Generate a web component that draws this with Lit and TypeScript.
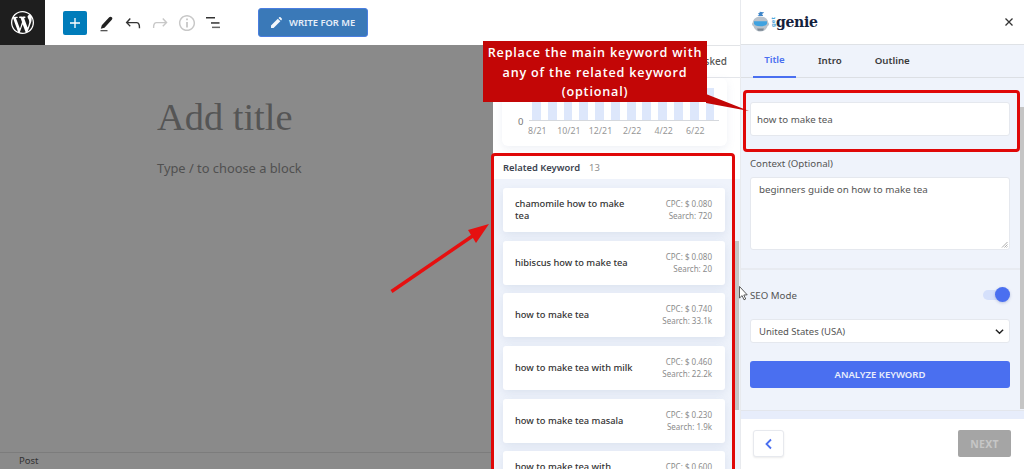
import { LitElement, html, css, svg } from "lit";
import { customElement } from "lit/decorators.js";

const keywords = [
  { name: "chamomile how to make tea", cpc: "CPC: $ 0.080", search: "Search: 720" },
  { name: "hibiscus how to make tea", cpc: "CPC: $ 0.080", search: "Search: 20" },
  { name: "how to make tea", cpc: "CPC: $ 0.740", search: "Search: 33.1k" },
  { name: "how to make tea with milk", cpc: "CPC: $ 0.460", search: "Search: 22.2k" },
  { name: "how to make tea masala", cpc: "CPC: $ 0.230", search: "Search: 1.9k" },
  { name: "how to make tea with condensed milk", cpc: "CPC: $ 0.600", search: "Search: 1k" },
];
const months = ["8/21", "10/21", "12/21", "2/22", "4/22", "6/22"];

@customElement("app-root")
export class AppRoot extends LitElement {
  static styles = css`
    :host { display: block; width: 1024px; height: 469px; overflow: hidden; position: relative; font-family: "Noto Sans", sans-serif; background: #fff; }
    * { box-sizing: border-box; }
    .page { display: flex; width: 1024px; height: 469px; }
    .left { width: 740px; display: flex; flex-direction: column; flex: none; }
    .topbar { height: 45px; flex: none; display: flex; align-items: center; background: #fff; }
    .wp { width: 45px; height: 45px; background: #1e1e1e; display: flex; align-items: center; justify-content: center; color: #fff; flex: none; }
    .wp svg { width: 23px; height: 23px; fill: currentColor; }
    .plus { width: 24px; height: 24px; margin-left: 18px; background: #007cba; border-radius: 2px; display: flex; align-items: center; justify-content: center; }
    .tools { display: flex; margin-left: 5px; }
    .tools svg { display: block; width: 22px; height: 22px; }
    .tool { width: 27px; height: 24px; display: flex; align-items: center; justify-content: center; }
    .write { margin-left: 31px; width: 110px; height: 29px; border: 1px solid #4a7ee0; border-radius: 3px; background: #3a79b8; color: #e6eef8; display: flex; align-items: center; gap: 7px; padding-left: 12px; font-size: 9.4px; font-weight: 600; }
    .body { flex: 1; display: flex; min-height: 0; }
    .editor { flex: 1; background: #8a8a8a; display: flex; flex-direction: column; }
    .canvas { flex: 1; padding: 49px 0 0 157px; color: #4c4c4c; }
    .add { font-family: "Liberation Serif", serif; font-size: 38.4px; line-height: 46px; color: #555; }
    .type { font-size: 12.85px; line-height: 18px; margin-top: 19px; color: #505050; }
    .status { height: 17px; border-top: 1px solid #7c7c7c; padding-left: 19px; font-size: 9.5px; line-height: 15px; color: #333; }
    .mid { width: 247px; flex: none; background: #fff; display: flex; flex-direction: column; border-top: 1px solid #e2e4e7; position: relative; overflow: hidden; }
    .midtabs { height: 32px; flex: none; border-bottom: 1px solid #e4e6ea; display: flex; justify-content: flex-end; align-items: center; padding-right: 13px; font-size: 10px; font-weight: 500; color: #555; padding-bottom: 2px; }
    .chart { height: 68px; margin: 0 13px 0 9px; border-radius: 6px; background: #fff; box-shadow: 0 3px 8px rgba(120,140,180,.12); position: relative; flex: none; }
    .chartin { display: flex; flex-direction: column; padding: 10px 0 0 15px; }
    .bars { display: flex; gap: 6.9px; height: 33px; width: 190px; margin-left: 12px; padding-left: 3px; flex: none; border-bottom: 1px solid #d5d8dd; }
    .bars i { display: block; width: 8.9px; height: 100%; background: #dde7fb; flex: none; }
    .zero { position: absolute; left: 16px; top: 37px; font-size: 9.5px; color: #777; line-height: 14px; }
    .months { display: flex; margin-left: 4.5px; font-size: 8.8px; color: #979797; line-height: 12px; margin-top: 4px; }
    .months span { width: 31.6px; text-align: center; flex: none; }
    .relhead { flex: none; margin-top: 9px; height: 24px; padding: 0 0 0 10px; display: flex; align-items: center; gap: 9px; font-size: 9.4px; font-weight: 600; color: #3d4450; }
    .relhead b { font-weight: 400; color: #8e8e8e; font-size: 9.5px; }
    .list { flex: 1; background: #eff3fb; padding: 9px 15px 0 10px; display: flex; flex-direction: column; gap: 8.7px; }
    .kw { height: 44px; flex: none; background: #fff; border-radius: 3px; box-shadow: 0 3px 8px rgba(120,140,180,.16); display: flex; align-items: center; justify-content: space-between; padding: 0 13px 0 12px; }
    .kwname { font-size: 9.3px; line-height: 12px; color: #333; width: 125px; font-weight: 500; }
    .kwmeta { font-size: 8px; line-height: 12px; color: #8c8c8c; text-align: right; }
    .side { flex: 1; min-width: 0; display: flex; flex-direction: column; border-left: 1px solid #e8eaee; background: #eff3fb; position: relative; }
    .shead { height: 45px; flex: none; background: #fff; border-bottom: 1px solid #dfe2e6; display: flex; align-items: center; justify-content: space-between; padding: 0 10px 0 10px; }
    .logo { display: flex; align-items: center; }
    .logo svg { display: block; }
    .get { writing-mode: vertical-rl; transform: rotate(180deg); font-size: 6px; line-height: 6px; color: #4aa8dc; font-weight: 700; }
    .genie { font-family: "DejaVu Serif", serif; font-weight: 700; font-size: 14px; line-height: 20px; color: #14213d; letter-spacing: -.3px; }
    .close { width: 10px; height: 10px; display: block; }
    .stabs { height: 33px; flex: none; display: flex; border-bottom: 1px solid #dcdfe4; font-size: 9.7px; font-weight: 600; color: #3b3b3b; padding-left: 12px; }
    .stab { height: 33px; display: flex; align-items: center; justify-content: center; padding-bottom: 3px; }
    .stab.on { width: 43px; color: #4a6ff0; border-bottom: 2px solid #4a6ff0; }
    .stab.t2 { margin-left: 22px; }
    .stab.t3 { margin-left: 33px; }
    .form { flex: 1; padding: 24px 14px 0 9px; display: flex; flex-direction: column; }
    .input { height: 34px; flex: none; background: #fff; border: 1px solid #e5e8ee; border-radius: 3px; padding-left: 6px; font-size: 9.7px; line-height: 33px; color: #555; }
    .label { font-size: 9.7px; line-height: 14px; color: #555; margin-top: 21px; }
    .ta { height: 73px; flex: none; margin-top: 6px; background: #fff; border: 1px solid #e5e8ee; border-radius: 3px; padding: 5px 8px; font-size: 9.8px; line-height: 14px; color: #555; position: relative; }
    .grip { position: absolute; right: 1px; bottom: 1px; width: 7px; height: 7px; display: block; }
    .hr { height: 2px; flex: none; background: #e8ebf1; margin: 18px -14px 0 -9px; }
    .seo { display: flex; align-items: center; justify-content: space-between; height: 14px; margin-top: 18px; font-size: 9.7px; color: #555; }
    .toggle { width: 27px; height: 10px; border-radius: 5px; background: #d5e0fb; position: relative; }
    .toggle i { position: absolute; right: 0; top: -3px; width: 15px; height: 15px; border-radius: 50%; background: #4a6ff0; box-shadow: 0 1px 3px rgba(60,80,160,.3); }
    .select { height: 24px; flex: none; margin-top: 17px; background: #fff; border: 1px solid #e5e8ee; border-radius: 3px; display: flex; align-items: center; justify-content: space-between; padding: 0 5px 0 8px; font-size: 9.5px; color: #555; }
    .select svg { width: 9px; height: 9px; display: block; }
    .analyze { height: 27px; flex: none; margin-top: 18px; background: #4a6ff0; color: #e9eefc; border-radius: 3px; display: flex; align-items: center; justify-content: center; font-size: 9.5px; font-weight: 600; }
    .fade { height: 9px; flex: none; background: #e7edfb; border-top: 1px solid #e3e6ec; }
    .sfoot { height: 50px; flex: none; background: #fff; display: flex; justify-content: space-between; align-items: flex-start; padding: 11px 13px 0 12px; }
    .back { width: 31px; height: 27px; background: #fff; border: 1px solid #e7e9ee; border-radius: 3px; box-shadow: 0 1px 2px rgba(0,0,0,.08); display: flex; align-items: center; justify-content: center; }
    .back svg { width: 10px; height: 12px; display: block; }
    .next { width: 53px; height: 27px; background: #a5a5a5; color: #c6c6c6; border-radius: 2px; display: flex; align-items: center; justify-content: center; font-size: 10.5px; font-weight: 700; letter-spacing: .3px; }
    .thumb { position: absolute; width: 4px; background: #c5c5c5; }
    .thumb.a { left: 735px; top: 241px; height: 169px; }
    .thumb.b { left: 1020px; top: 107px; height: 302px; }
    .callout { position: absolute; left: 483px; top: 41px; width: 224px; height: 61px; background: #c30606; color: #fff; text-align: center; font-family: "Open Sans", sans-serif; font-weight: 600; font-size: 12.6px; line-height: 19.5px; padding-top: 2px; letter-spacing: .82px; }
    .box { position: absolute; border: 3px solid #e00808; border-radius: 4px; }
    .box.r { left: 491px; top: 153px; width: 244px; height: 330px; }
    .box.t { left: 743px; top: 90px; width: 277px; height: 62px; }
    .overlay { position: absolute; left: 0; top: 0; width: 1024px; height: 469px; pointer-events: none; display: block; }
  `;

  render() {
    return html`
      <div class="page">
        <div class="left">
          <div class="topbar">
            <div class="wp">
              <svg viewBox="0 0 20 20"><path d="M20 10c0-5.51-4.49-10-10-10C4.48 0 0 4.49 0 10c0 5.52 4.48 10 10 10 5.51 0 10-4.48 10-10zM7.78 15.37L4.37 6.22c.55-.02 1.17-.08 1.17-.08.5-.06.44-1.13-.06-1.11 0 0-1.45.11-2.37.11-.18 0-.37 0-.58-.01C4.12 2.69 6.87 1.11 10 1.11c2.33 0 4.45.87 6.05 2.34-.68-.11-1.65.39-1.65 1.58 0 .74.45 1.36.9 2.1.35.61.55 1.36.55 2.46 0 1.49-1.4 5-1.4 5l-3.03-8.37c.54-.02.82-.17.82-.17.5-.05.44-1.25-.06-1.22 0 0-1.44.12-2.38.12-.87 0-2.33-.12-2.33-.12-.5-.03-.56 1.2-.06 1.22l.92.08 1.26 3.41zM17.41 10c.24-.64.74-1.87.43-4.25.7 1.29 1.05 2.71 1.05 4.25 0 3.29-1.73 6.24-4.4 7.78.97-2.59 1.94-5.2 2.92-7.78zM6.1 18.09C3.12 16.65 1.11 13.53 1.11 10c0-1.3.23-2.48.72-3.59C3.25 10.3 4.67 14.2 6.1 18.09zm4.03-6.63l2.58 6.98c-.86.29-1.76.45-2.71.45-.79 0-1.57-.11-2.29-.33.81-2.38 1.62-4.74 2.42-7.1z"/></svg>
            </div>
            <div class="plus">
              <svg width="20" height="20" viewBox="0 0 24 24" fill="#fff"><path d="M18 11.2h-5.2V6h-1.6v5.2H6v1.6h5.2V18h1.6v-5.2H18z"/></svg>
            </div>
            <div class="tools">
              <div class="tool"><svg viewBox="0 0 22 22"><path d="M6.800 13.200 14.200 5.200c.8-.8 1.900-.7 2.600 0 .7.700.8 1.700 0 2.500L9.500 15.800l-3.700 1z" fill="#222"/><rect x="5.500" y="18" width="7" height="1.300" fill="#555"/></svg></div>
              <div class="tool"><svg viewBox="0 0 24 24" fill="#333"><path d="M18.3 11.7c-.6-.6-1.4-.9-2.3-.9H6.7l2.9-3.3-1.1-1-4.5 5L8.5 16l1-1-2.7-2.7H16c.5 0 .9.2 1.3.5 1 1 1 3.4 1 4.5v.3h1.5v-.2c0-1.5 0-4.3-1.5-5.7z"/></svg></div>
              <div class="tool"><svg viewBox="0 0 24 24" fill="#c8c8c8"><path d="M15.6 6.5l-1.1 1 2.9 3.3H8c-.9 0-1.7.3-2.3.9-1.4 1.5-1.4 4.2-1.4 5.6v.2h1.5v-.3c0-1.1 0-3.5 1-4.5.3-.3.7-.5 1.3-.5h9.2L14.5 15l1.1 1.1 4.6-4.6-4.6-5z"/></svg></div>
              <div class="tool"><svg viewBox="0 0 24 24" fill="#c8c8c8"><path d="M12 3.2c-4.8 0-8.8 3.9-8.8 8.8 0 4.8 3.9 8.8 8.8 8.8 4.8 0 8.8-3.9 8.8-8.8 0-4.8-4-8.8-8.8-8.8zm0 16c-4 0-7.2-3.3-7.2-7.2C4.8 8 8 4.800 12 4.8s7.2 3.3 7.2 7.2c0 4-3.2 7.2-7.2 7.2zM11 17h2v-6h-2v6zm0-8h2V7h-2v2z"/></svg></div>
              <div class="tool"><svg viewBox="0 0 22 22"><rect x="3" y="5" width="9" height="1.500" fill="#333"/><rect x="8" y="10.200" width="8.500" height="1.500" fill="#333"/><rect x="9" y="14.600" width="8" height="1.500" fill="#666"/></svg></div>
            </div>
            <div class="write">
              <svg width="11" height="11" viewBox="0 0 12 12" fill="#f2f6fb"><path d="M0 12V9.200L7.400 1.800l2.800 2.800L2.800 12zM8.200 1 9 .3c.4-.4 1-.4 1.400 0l1.300 1.300c.4.4.4 1 0 1.400l-.7.8z"/></svg>
              <span>WRITE FOR ME</span>
            </div>
          </div>
          <div class="body">
            <div class="editor">
              <div class="canvas">
                <div class="add">Add title</div>
                <div class="type">Type / to choose a block</div>
              </div>
              <div class="status">Post</div>
            </div>
            <div class="mid">
              <div class="midtabs">Asked</div>
              <div class="chart">
                <div class="chartin">
                  <div class="bars">${Array.from({ length: 12 }, () => html`<i></i>`)}</div>
                  <div class="months">${months.map((m) => html`<span>${m}</span>`)}</div>
                </div>
                <span class="zero">0</span>
              </div>
              <div class="relhead"><span>Related Keyword</span><b>13</b></div>
              <div class="list">
                ${keywords.map(
                  (k) => html`<div class="kw">
                    <div class="kwname">${k.name}</div>
                    <div class="kwmeta">${k.cpc}<br />${k.search}</div>
                  </div>`
                )}
              </div>
            </div>
          </div>
        </div>
        <div class="side">
          <div class="shead">
            <div class="logo">
              <svg width="19" height="24" viewBox="1 0 22 27">
                <path d="M11 1.500c2 .2 3.500 1 5 .5-.5 1.500-1.500 2-2.500 2.300 1 .7 1.500 1.500 1.500 2.200-1.800.3-4.500.3-6.500-.5 1-.5 1.500-1 2-1.500-1-.2-1.500-.7-1.500-1.200 1 .2 1.700 0 2-.5z" fill="#3f86c9"/>
                <path d="M12 7c5 0 8.500 3 9 7 .7.500 1 1.500.8 2.500-.2 1-.8 1.500-1.500 1.500-1 3.500-4.300 6.500-8.300 6.500S4.700 21.500 3.700 18c-.7 0-1.300-.5-1.500-1.500-.2-1 .1-2 .8-2.500.5-4 4-7 9-7z" fill="#b9c2cb"/>
                <path d="M4.500 12.500h15v2.500c0 2-2.500 3.500-7.500 3.500S4.500 17 4.500 15z" fill="#3fa2e0"/>
                <path d="M8 21h8l-1 2.500H9z" fill="#7c8894"/>
              </svg>
              <span class="get">get</span>
              <span class="genie">genie</span>
            </div>
            <svg class="close" viewBox="0 0 10 10"><path d="M1.500 1.500l7 7M8.500 1.500l-7 7" stroke="#333" stroke-width="1.300" fill="none"/></svg>
          </div>
          <div class="stabs">
            <div class="stab on">Title</div>
            <div class="stab t2">Intro</div>
            <div class="stab t3">Outline</div>
          </div>
          <div class="form">
            <div class="input">how to make tea</div>
            <div class="label">Context (Optional)</div>
            <div class="ta">beginners guide on how to make tea
              <svg class="grip" viewBox="0 0 7 7"><path d="M6.500 1 1 6.500M6.500 3.500 3.500 6.500M6.500 5.500l-1 1" stroke="#888" stroke-width=".7" fill="none"/></svg>
            </div>
            <div class="hr"></div>
            <div class="seo"><span>SEO Mode</span><div class="toggle"><i></i></div></div>
            <div class="select">
              <span>United States (USA)</span>
              <svg viewBox="0 0 10 10"><path d="M1 3l4 4 4-4" stroke="#222" stroke-width="1.600" fill="none"/></svg>
            </div>
            <div class="analyze">ANALYZE KEYWORD</div>
          </div>
          <div class="fade"></div>
          <div class="sfoot">
            <div class="back"><svg viewBox="0 0 10 12"><path d="M7 1.500 2.500 6 7 10.500" stroke="#4a6ff0" stroke-width="1.800" fill="none"/></svg></div>
            <div class="next">NEXT</div>
          </div>
        </div>
      </div>
      <div class="thumb a"></div>
      <div class="thumb b"></div>
      <div class="box r"></div>
      <div class="box t"></div>
      <svg class="overlay" viewBox="0 0 1024 469">
        ${svg`
          <polygon points="706,94 749,111 706,103" fill="#c30606"/>
          <path d="M391.500 291.500 L474 235" stroke="#e61010" stroke-width="3.500" fill="none"/>
          <polygon points="489,224 476,243 468,230" fill="#e61010"/>
          <path d="M739.500 286.500v11.500l2.600-2.400 1.900 4.200 1.700-.8-1.900-4 3.400-.2z" fill="#fff" stroke="#333" stroke-width=".8"/>
        `}
      </svg>
      <div class="callout">Replace the main keyword with<br />any of the related keyword<br />(optional)</div>
    `;
  }
}
